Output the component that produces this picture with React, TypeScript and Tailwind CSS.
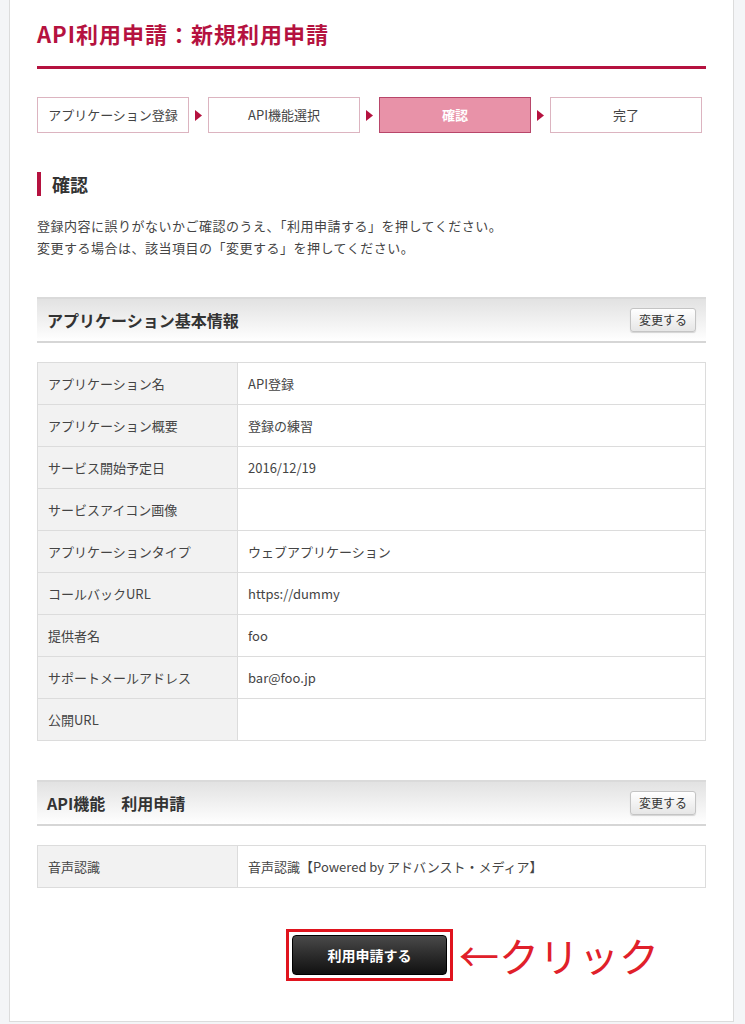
import React from "react";

const font = { fontFamily: '"Noto Sans CJK JP", "Noto Sans", sans-serif' };

function Step({ label, active }: { label: string; active?: boolean }) {
  return (
    <div
      className={
        "w-[152px] h-[36px] flex items-center justify-center text-[13px] border " +
        (active
          ? "bg-[#e892a8] border-[#b8466a] text-white font-bold"
          : "bg-white border-[#dcb4c0] text-[#444]")
      }
    >
      {label}
    </div>
  );
}

function Arrow() {
  return (
    <div className="w-[19px] flex items-center justify-center">
      <svg width="7" height="11" viewBox="0 0 7 11">
        <path d="M0 0 L7 5.5 L0 11 Z" fill="#b5123f" />
      </svg>
    </div>
  );
}

function SectionHeader({ title }: { title: string }) {
  return (
    <div className="h-[46px] border-t-2 border-[#dadada] border-b-2 border-b-[#d6d6d6] bg-gradient-to-b from-[#e2e2e2] to-[#ffffff] flex items-center justify-between pl-[10px] pr-[10px]">
      <div className="text-[16px] font-bold text-[#333]">{title}</div>
      <button className="h-[24px] px-[8px] text-[12px] text-[#333] bg-gradient-to-b from-[#ffffff] to-[#e6e6e6] border border-[#c4c4c4] rounded-[3px] shadow-[0_1px_1px_rgba(0,0,0,0.15)]">
        変更する
      </button>
    </div>
  );
}

function Table({ rows }: { rows: [string, string][] }) {
  return (
    <div className="border border-[#dcdcdc] border-b-0">
      {rows.map(([k, v], i) => (
        <div key={i} className="flex h-[42px] border-b border-[#dcdcdc] text-[13px] text-[#444]">
          <div className="w-[200px] bg-[#f2f2f2] border-r border-[#dcdcdc] flex items-center pl-[10px]">{k}</div>
          <div className="flex-1 flex items-center pl-[10px] bg-white">{v}</div>
        </div>
      ))}
    </div>
  );
}

export default function App() {
  return (
    <div className="min-h-screen bg-[#f4f5f7] pl-[9px] pr-[11px]" style={font}>
      <div className="bg-white border-x border-b border-[#dcdcdc] pl-[27px] pr-[27px] pt-[18px] pb-[40px] h-[1022px]">
        <h1 className="text-[22px] font-bold text-[#b5123f] leading-[30px] tracking-[1px]">API利用申請：新規利用申請</h1>
        <div className="mt-[18px] h-[3px] bg-[#b5123f]" />
        <div className="mt-[28px] flex">
          <Step label="アプリケーション登録" />
          <Arrow />
          <Step label="API機能選択" />
          <Arrow />
          <Step label="確認" active />
          <Arrow />
          <Step label="完了" />
        </div>
        <div className="mt-[39px] flex items-center h-[24px]">
          <div className="w-[4px] h-[24px] bg-[#b5123f]" />
          <div className="ml-[11px] text-[18px] font-bold text-[#333]">確認</div>
        </div>
        <div className="mt-[19px] text-[13px] tracking-[0.5px] text-[#444] leading-[22px]">
          <p>登録内容に誤りがないかご確認のうえ、「利用申請する」を押してください。</p>
          <p>変更する場合は、該当項目の「変更する」を押してください。</p>
        </div>
        <div className="mt-[38px]">
          <SectionHeader title="アプリケーション基本情報" />
        </div>
        <div className="mt-[19px]">
          <Table
            rows={[
              ["アプリケーション名", "API登録"],
              ["アプリケーション概要", "登録の練習"],
              ["サービス開始予定日", "2016/12/19"],
              ["サービスアイコン画像", ""],
              ["アプリケーションタイプ", "ウェブアプリケーション"],
              ["コールバックURL", "https://dummy"],
              ["提供者名", "foo"],
              ["サポートメールアドレス", "bar@foo.jp"],
              ["公開URL", ""],
            ]}
          />
        </div>
        <div className="mt-[39px]">
          <SectionHeader title="API機能　利用申請" />
        </div>
        <div className="mt-[19px]">
          <Table rows={[["音声認識", "音声認識【Powered by アドバンスト・メディア】"]]} />
        </div>
        <div className="mt-[41px] flex items-center pl-[249px]">
          <div className="border-[3px] border-[#e0141e] p-[3px]">
            <button className="w-[155px] h-[40px] rounded-[4px] bg-gradient-to-b from-[#4a4a4a] to-[#111] text-white text-[14px] font-bold border border-[#000]">
              利用申請する
            </button>
          </div>
          <div className="ml-[6px] text-[40px] text-[#e0202a] leading-[44px] tracking-[0px]">←クリック</div>
        </div>
      </div>
    </div>
  );
}
